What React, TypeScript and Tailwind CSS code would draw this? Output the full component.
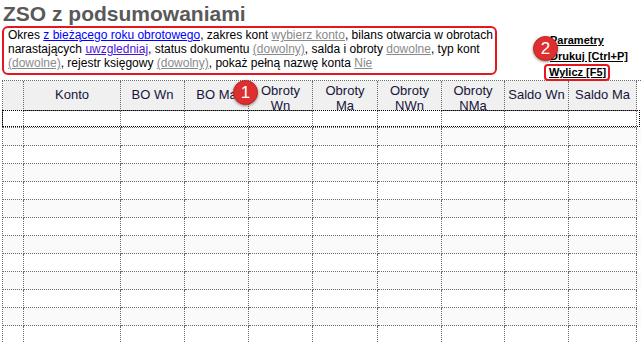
import React from 'react'

const cols = 'grid grid-cols-[21px_97px_64px_64px_64px_65px_64px_63px_64px_68px]'
const cell = 'border-r border-b border-dotted border-[#6b6b6b]'

function Badge({ n, className }: { n: string; className: string }) {
  return (
    <div
      className={`absolute w-[25px] h-[25px] rounded-full bg-[#dd2f2f] border border-[#c42222] shadow-[0_1px_3px_rgba(0,0,0,0.45)] flex items-center justify-center text-white text-[17px] leading-none ${className}`}
    >
      {n}
    </div>
  )
}

export default function App() {
  const headers: { label: React.ReactNode; two?: boolean }[] = [
    { label: '' },
    { label: 'Konto' },
    { label: 'BO Wn' },
    { label: 'BO Ma' },
    { label: <>Obroty<br />Wn</>, two: true },
    { label: <>Obroty<br />Ma</>, two: true },
    { label: <>Obroty<br />NWn</>, two: true },
    { label: <>Obroty<br />NMa</>, two: true },
    { label: 'Saldo Wn' },
    { label: 'Saldo Ma' },
  ]
  const rows = Array.from({ length: 13 })

  return (
    <div className="relative w-[641px] h-[343px] overflow-hidden bg-white text-black font-['Liberation_Sans',Arial,sans-serif]">
      {/* Tytuł */}
      <h1 className="h-[26px] pl-[3px] text-[21px] leading-[28px] font-bold text-[#595959]">ZSO z podsumowaniami</h1>

      {/* Opis filtrów + akcje */}
      <div className="flex h-[54px] items-start">
        <div className="ml-[2px] w-[495px] h-[49px] border-2 border-[#e4161e] rounded-[6px] pl-[4px] pt-0 text-[12px] leading-[14px] whitespace-nowrap">
          Okres <a className="text-[#0000ff] underline">z bieżącego roku obrotowego</a>, zakres kont{' '}
          <a className="text-[#8a8a8a] underline">wybierz konto</a>, bilans otwarcia w obrotach
          <br />
          narastających <a className="text-[#4b13d6] underline">uwzgledniaj</a>, status dokumentu{' '}
          <a className="text-[#8a8a8a] underline">(dowolny)</a>, salda i obroty{' '}
          <a className="text-[#8a8a8a] underline">dowolne</a>, typ kont
          <br />
          <a className="text-[#8a8a8a] underline">(dowolne)</a>, rejestr księgowy{' '}
          <a className="text-[#8a8a8a] underline">(dowolny)</a>, pokaż pełną nazwę konta{' '}
          <a className="text-[#8a8a8a] underline">Nie</a>
        </div>
        <div className="ml-[53px] mt-[6px] flex flex-col items-start text-[11px] font-bold leading-[16px] whitespace-nowrap">
          <a className="underline">Parametry</a>
          <a className="underline">Drukuj [Ctrl+P]</a>
          <a className="underline -ml-[6px] pl-[3px] pr-[2px] leading-[13px] border-2 border-[#e4161e] rounded-[4px]">Wylicz [F5]</a>
        </div>
      </div>

      {/* Tabela */}
      <div className="ml-[2px] border-l border-t border-dotted border-[#6b6b6b]">
        <div className={cols}>
          {headers.map((h, i) => (
            <div
              key={i}
              className={`${cell} h-[30px] bg-[#f0f0f0] overflow-hidden text-center text-[13px] text-[#15153a] px-[2px] ${h.two ? 'pt-[2px] leading-[15px]' : 'leading-[28px]'}`}
            >
              {h.label}
            </div>
          ))}
        </div>
        {rows.map((_, r) => (
          <div key={r} className={`relative ${cols} ${r % 2 === 1 ? 'bg-[#fafafa]' : 'bg-white'}`}>
            {headers.map((_, c) => (
              <div key={c} className={`${cell} ${r === 0 ? 'h-[17px]' : 'h-[18px]'}`} />
            ))}
            {r === 0 && (
              <div className="absolute -left-px -top-px right-[1px] bottom-[1px] border border-dotted border-black pointer-events-none" />
            )}
          </div>
        ))}
      </div>

      <Badge n="1" className="left-[233px] top-[80px]" />
      <Badge n="2" className="left-[533px] top-[36px]" />
    </div>
  )
}
